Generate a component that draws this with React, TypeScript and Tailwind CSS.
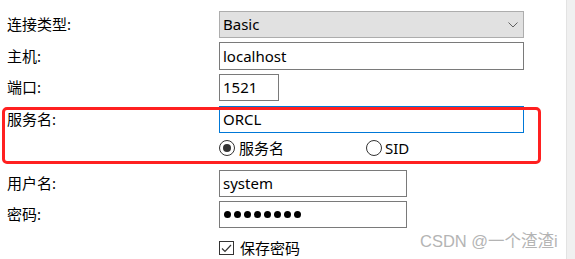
const font = { fontFamily: '"Noto Sans", "Noto Sans CJK SC", sans-serif' };

function Label({ text, h }: { text: string; h: string }) {
  return <div className={`flex items-center pl-[7px] ${h}`}>{text}</div>;
}

function Input({ value, w, h, active }: { value: string; w: string; h: string; active?: boolean }) {
  return (
    <div
      className={`flex items-center pl-[3px] bg-white border ${active ? "border-[#0078d7]" : "border-[#7a7a7a]"} ${w} ${h}`}
    >
      {value}
    </div>
  );
}

export default function App() {
  return (
    <div className="relative w-[575px] h-[259px] overflow-hidden bg-white text-[15px] text-black flex" style={font}>
      <div className="flex-1 pt-[11px]">
        <div className="grid grid-cols-[219px_1fr] gap-y-[4px]">
          <Label text="连接类型:" h="h-[27px]" />
          <div className="flex items-center justify-between w-[305px] h-[27px] bg-[#e1e1e1] border border-[#adadad] pl-[3px] pr-[5px]">
            <span>Basic</span>
            <svg width="10" height="6" viewBox="0 0 10 6">
              <path d="M0.5 0.5 L5 5 L9.5 0.5" fill="none" stroke="#606060" strokeWidth="1" />
            </svg>
          </div>

          <Label text="主机:" h="h-[28px]" />
          <Input value="localhost" w="w-[305px]" h="h-[28px]" />

          <Label text="端口:" h="h-[27px]" />
          <Input value="1521" w="w-[60px]" h="h-[27px]" />

          <div className="mt-[1px]"><Label text="服务名:" h="h-[27px]" /></div>
          <div className="mt-[1px]"><Input value="ORCL" w="w-[305px]" h="h-[27px]" active /></div>

          <div />
          <div className="flex items-center h-[16px] mt-[3px] mb-[10px]">
            <div className="flex items-center gap-[4px] w-[147px]">
              <span className="w-[16px] h-[16px] rounded-full border border-[#333] flex items-center justify-center">
                <span className="w-[8px] h-[8px] rounded-full bg-[#333]" />
              </span>
              <span>服务名</span>
            </div>
            <div className="flex items-center gap-[3px]">
              <span className="w-[16px] h-[16px] rounded-full border border-[#333]" />
              <span>SID</span>
            </div>
          </div>

          <Label text="用户名:" h="h-[27px]" />
          <Input value="system" w="w-[188px]" h="h-[27px]" />

          <Label text="密码:" h="h-[27px]" />
          <div className="flex items-center gap-[3px] pl-[4px] w-[188px] h-[27px] border border-[#7a7a7a]">
            {Array.from({ length: 8 }).map((_, i) => (
              <span key={i} className="w-[7px] h-[7px] rounded-full bg-black" />
            ))}
          </div>

          <div />
          <div className="flex items-center gap-[6px] h-[14px] mt-[9px]">
            <span className="w-[15px] h-[14px] border border-[#333] flex items-center justify-center">
              <svg width="11" height="9" viewBox="0 0 11 9">
                <path d="M1 4.5 L4 7.5 L10 1" fill="none" stroke="#333" strokeWidth="1.2" />
              </svg>
            </span>
            <span>保存密码</span>
          </div>
        </div>
      </div>
      <div className="w-[9px] bg-[#f0f0f0] border-l border-[#e3e3e3]" />

      {/* red annotation box */}
      <div className="absolute left-[2px] top-[107px] w-[539px] h-[57px] border-[3px] border-[#ff2020] rounded-[5px]" />

      <div
        className="absolute left-[420px] top-[229px] text-[#b4b4b4] text-[16.5px]"
        style={{ fontFamily: '"Liberation Sans", "Noto Sans CJK SC", sans-serif' }}
      >
        CSDN @一个渣渣i
      </div>
    </div>
  );
}
